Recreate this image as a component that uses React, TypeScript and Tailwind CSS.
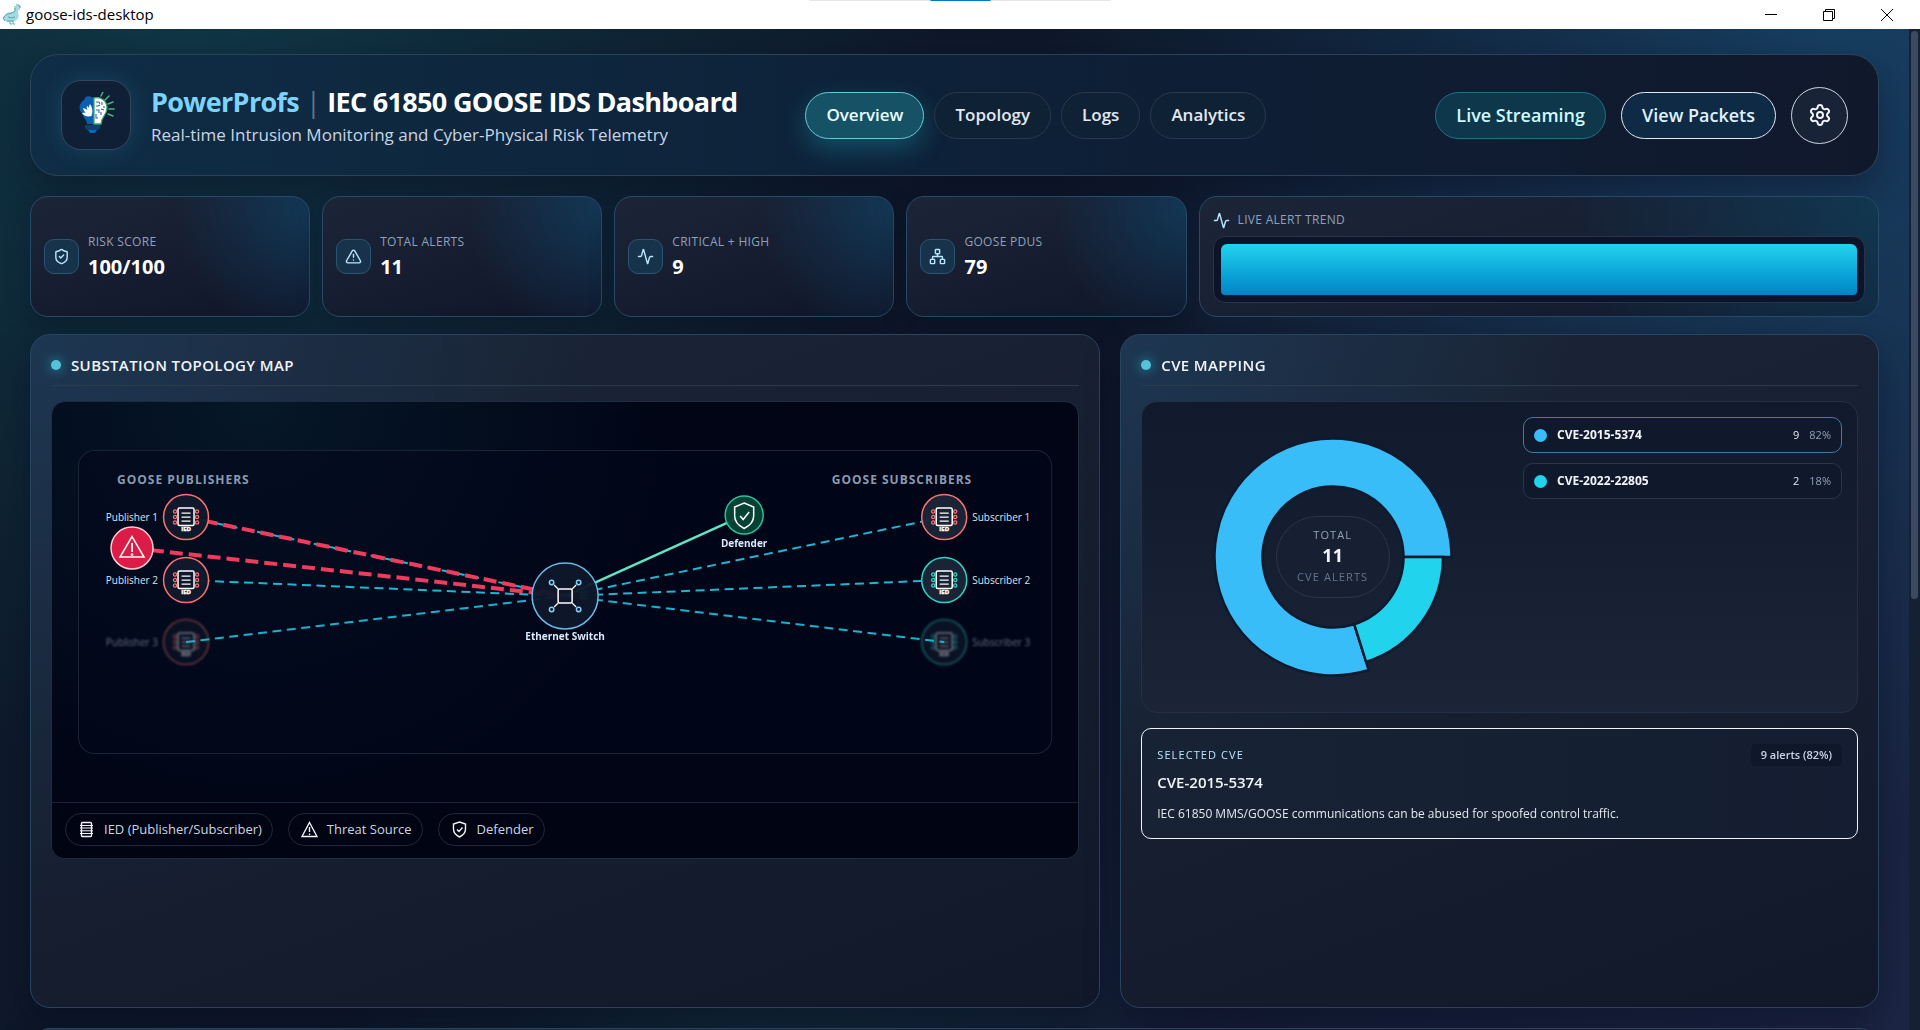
import {Activity, Network, Settings, ShieldCheck, TriangleAlert} from "lucide-react";
import type {LucideIcon} from "lucide-react";
import type {ReactNode} from "react";

const tabs = ["Overview", "Topology", "Logs", "Analytics"];

const stats: {label: string; value: string; icon: LucideIcon}[] = [
    {label: "Risk Score", value: "100/100", icon: ShieldCheck},
    {label: "Total Alerts", value: "11", icon: TriangleAlert},
    {label: "Critical + High", value: "9", icon: Activity},
    {label: "GOOSE PDUs", value: "79", icon: Network},
];

const cves = [
    {id: "CVE-2015-5374", count: 9, pct: "82%", dot: "bg-[#38bdf8]", box: "border-[#3f7d9f]"},
    {id: "CVE-2022-22805", count: 2, pct: "18%", dot: "bg-[#22d3ee]", box: "border-[#28354a]"},
];

const rows = [115, 178, 240];

const TitleBar = () => (
    <div className="relative flex h-[29px] shrink-0 items-center justify-between bg-white text-black">
        <div className="flex items-center gap-[5px] pl-[2px]">
            <svg width="19" height="21" viewBox="0 0 19 21">
                <path d="M12 4h2v-2h4v4h-2v3l1 3-2 4-4 2H5l-3-2-1-3 4-4 5-1 3-1z" fill="#a5dbe0"/>
                <path d="M14 1h3v1h1v2M13 2v5l-3 2-5 1-4 4 2 3M6 13l4 1 3-1M5 17h7M8 18v2h2M11 18v2h2" fill="none" stroke="#4aa9b3"/>
            </svg>
            <span className="text-[15px]">goose-ids-desktop</span>
        </div>
        <div className="absolute left-1/2 top-0 flex h-px w-[301px] -translate-x-1/2 justify-center bg-[#e5e5e5]">
            <span className="h-px w-[60px] bg-[#0078d7]"/>
        </div>
        <div className="flex h-full pr-1">
            <button aria-label="Minimize" className="flex w-[58px] items-center justify-center">
                <svg width="12" height="12"><path d="M0 5.5h12" stroke="#000"/></svg>
            </button>
            <button aria-label="Restore" className="flex w-[58px] items-center justify-center">
                <svg width="12" height="12" fill="none" stroke="#000"><path d="M.5 2.5h9v9h-9zM2.500 2.500v-2h9v9h-2"/></svg>
            </button>
            <button aria-label="Close" className="flex w-[58px] items-center justify-center">
                <svg width="12" height="12" stroke="#000"><path d="M0 0l12 12M12 0L0 12"/></svg>
            </button>
        </div>
    </div>
);

const Logo = () => (
    <div className="flex size-[70px] items-center justify-center rounded-[20px] border border-[#33475c] bg-[#0e1f36] shadow-[0_0_24px_rgba(56,189,248,0.16)]">
        <svg width="40" height="46" viewBox="0 0 40 46">
            <path d="M17 6c-4-3-8-2-9 2-5 3-6 9-2 13 1 5 5 7 5 11h7V6z" fill="#0c5fae"/>
            <path d="M18 6c8-2 13 4 13 10 0 7-6 9-6 16h-7z" fill="#fff" stroke="#3fa66b" strokeWidth="1.300"/>
            <path d="M20 10h3l1 2M20 14h2l2-1M26 10v3M28 14v2M20 18h3v3M25 17l3 1M20 22v4h2M25 20v3" fill="none" stroke="#2b6aa8" strokeWidth="1.100"/>
            <path d="M16 24c-5-1-8-4-9-8 4 1 6 3 9 8zM16 23c-3-4-4-8-2-11 2 3 3 6 2 11zM16 23c-4-3-6-6-5-9 3 2 5 5 5 9zM16 24c-5 1-8 0-10-3 4-1 7 0 10 3z" fill="#fff"/>
            <path d="M9 33h15v3l-2 2H11l-2-2z" fill="#0d3f78"/>
            <path d="M12 38h9l-2 3h-5z" fill="#0f67b5"/>
            <path d="M25 4l2-4M29 8l4-4M32 12l5-2M33 17h5M32 22l5 2" stroke="#4fb37a" strokeWidth="1.500" strokeLinecap="round"/>
        </svg>
    </div>
);

const Header = () => (
    <header className="flex items-center rounded-[28px] border border-[#2c4258] bg-linear-to-r from-[#0f2d45] via-[#0d2138] via-50% to-[#10182c] px-[30px] py-[25px] shadow-[0_16px_40px_rgba(8,12,30,0.45)]">
        <div className="flex items-center gap-5">
            <Logo/>
            <div className="pt-1">
                <h1 className="text-[27px] leading-9 font-bold tracking-tight text-white">
                    <span className="text-[#7dd3fc]">PowerProfs</span>
                    <span className="mx-[7px] font-normal text-slate-500">|</span>
                    IEC 61850 GOOSE IDS Dashboard
                </h1>
                <p className="text-[17px] leading-[30px] text-slate-300">Real-time Intrusion Monitoring and Cyber-Physical Risk Telemetry</p>
            </div>
        </div>
        <nav className="mr-auto ml-[68px] flex gap-[10px]">
            {tabs.map((tab, i) => (
                <button
                    key={tab}
                    className={`h-[47px] rounded-full border px-5 text-[17px] font-semibold ${i === 0
                        ? "border-[#67c9d3] bg-[#155265] text-cyan-50 shadow-[0_10px_26px_rgba(34,211,238,0.25)]"
                        : "border-[#28394d] bg-[#0f2135] text-slate-200"}`}
                >{tab}</button>
            ))}
        </nav>
        <div className="flex items-center gap-[15px]">
            <button className="h-[47px] rounded-full border border-[#24707f] bg-[#0f374b] px-5 text-lg font-semibold text-[#cffafe]">Live Streaming</button>
            <button className="h-[47px] rounded-full border border-slate-200 bg-[#0f2a44] px-5 text-lg font-semibold text-sky-100">View Packets</button>
            <button aria-label="Settings" className="flex size-[57px] items-center justify-center rounded-full border border-slate-300 bg-[#182338] text-slate-100">
                <Settings size={24} strokeWidth={2}/>
            </button>
        </div>
    </header>
);

const StatCard = ({label, value, icon: Icon}: {label: string; value: string; icon: LucideIcon}) => (
    <div className="flex items-center gap-[9px] rounded-[18px] border border-[#274a66] bg-[radial-gradient(circle_at_100%_10%,rgba(14,80,120,0.5),transparent_45%),linear-gradient(160deg,#1c2538,#101528)] px-[13px] shadow-[0_10px_24px_rgba(5,10,25,0.3)]">
        <span className="flex size-[35px] items-center justify-center rounded-[10px] border border-[#2a5470] bg-[#17334b] text-[#bae6fd]">
            <Icon size={17} strokeWidth={2}/>
        </span>
        <div>
            <p className="text-xs leading-5 tracking-wide text-slate-400 uppercase">{label}</p>
            <p className="text-xl leading-[30px] font-bold text-white">{value}</p>
        </div>
    </div>
);

const TrendCard = () => (
    <div className="rounded-[18px] border border-[#274a66] bg-[radial-gradient(circle_at_100%_10%,rgba(14,80,110,0.5),transparent_45%),linear-gradient(160deg,#1c2538,#111a2e)] p-[13px]">
        <div className="flex items-center gap-2 text-[#bae6fd]">
            <Activity size={17} strokeWidth={2}/>
            <span className="text-xs leading-5 tracking-wide text-slate-400">LIVE ALERT TREND</span>
        </div>
        <div className="mt-[6px] h-[67px] rounded-xl border border-[#28344a] bg-[#0d1328] p-[7px]">
            <div className="h-full rounded-t-md rounded-b-sm bg-linear-to-b from-[#22d3ee] to-[#0284c7]"/>
        </div>
    </div>
);

const Panel = ({title, span, children}: {title?: string; span: string; children?: ReactNode}) => (
    <section className={`${span} min-h-[674px] rounded-[20px] border border-[#274560] bg-[radial-gradient(circle_at_0%_0%,rgba(32,80,120,0.4),transparent_45%),linear-gradient(160deg,#1c2638,#111829)] px-5 pt-[18px] shadow-[0_14px_34px_rgba(5,10,30,0.4)]`}>
        {title && (
            <div className="flex items-center gap-[10px] border-b border-[#2b3b4e] pb-2">
                <span className="size-[10px] rounded-full bg-[#57c3d8] shadow-[0_0_12px_rgba(34,211,238,0.7)]"/>
                <h2 className="text-[15px] leading-6 font-semibold tracking-wide text-slate-100 uppercase">{title}</h2>
            </div>
        )}
        <div className="pt-[15px]">{children}</div>
    </section>
);

const IedNode = ({x, y, color, fill}: {x: number; y: number; color: string; fill: string}) => (
    <g transform={`translate(${x} ${y})`}>
        <circle r="22.500" fill={fill} fillOpacity="0.970" stroke={color} strokeWidth="1.500"/>
        <rect x="-8" y="-9" width="16" height="17.500" rx="1.500" fill="none" stroke="#fff" strokeWidth="1.500"/>
        <path d="M-4.500-4h9M-4.500 0h9M-4.500 4h9" stroke="#fff" strokeWidth="1.200"/>
        <g fill="none" stroke={color} strokeWidth="1.300">
            {[-5.5, 0, 5.5].map(dy => (
                <g key={dy}>
                    <circle cx="-11" cy={dy} r="1.600"/>
                    <circle cx="11" cy={dy} r="1.600"/>
                </g>
            ))}
        </g>
        <text y="14" textAnchor="middle" fontSize="6" fontWeight="700" fill="#fff" stroke="#fff" strokeWidth="0.400">IED</text>
    </g>
);

const TopologyMap = () => (
    <svg viewBox="0 0 1026 400" className="block w-full" fontSize="10">
        <rect x="26.500" y="48.500" width="973" height="303" rx="16" fill="#02061a" fillOpacity="0.500" stroke="#1c2434"/>
        <g fill="#8a9ab0" fontSize="12" fontWeight="700" letterSpacing="1">
            <text x="65" y="82">GOOSE PUBLISHERS</text>
            <text x="920" y="82" textAnchor="end">GOOSE SUBSCRIBERS</text>
        </g>
        {rows.slice(0, 2).map(y => (
            <path key={y} d={`M134 ${y}L513 194M513 194L892 ${y}`} stroke="#1fb6d0" strokeWidth="2" strokeDasharray="9 5.500"/>
        ))}
        <path d="M134 115L513 194M80 146L513 194" stroke="#ef3b5d" strokeWidth="4" strokeDasharray="13 6"/>
        <path d="M513 194L692 113" stroke="#5ee6c4" strokeWidth="2.500"/>
        {rows.map((y, i) => (
            <g key={y} className={i === 2 ? "opacity-45 blur-[1px]" : ""}>
                <IedNode x={134} y={y} color="#f87171" fill="#111a2c"/>
                <text x="106" y={y + 4} textAnchor="end" fill="#dbe4f0">Publisher {i + 1}</text>
                <IedNode x={892} y={y} color={i === 0 ? "#f87171" : "#2dd4bf"} fill="#1c2539"/>
                <text x="920" y={y + 4} fill="#dbe4f0">Subscriber {i + 1}</text>
            </g>
        ))}
        <path d="M134 240L513 194M513 194L892 240" stroke="#1fb6d0" strokeWidth="2" strokeDasharray="9 5.500"/>
        <g transform="translate(80 146)" stroke="#fff" fill="none">
            <circle r="21" fill="#dc1c46" stroke="#fecdd3" strokeWidth="1.500"/>
            <path d="M0-11.500L12 9h-24z" strokeWidth="1.500"/>
            <path d="M0-5v9" strokeWidth="1.800"/>
            <circle cy="6.500" r="0.900" strokeWidth="1"/>
        </g>
        <g transform="translate(513 194)" fill="none">
            <circle r="33" fill="#0f182b" fillOpacity="0.960" stroke="#6bb8e6" strokeWidth="1.500"/>
            <rect x="-7" y="-7" width="14" height="14" rx="1.500" stroke="#fff" strokeWidth="1.500"/>
            <path d="M-7-7l-4-4M7-7l4-4M-7 7l-4 4M7 7l4 4" stroke="#fff" strokeWidth="1.200"/>
            <g stroke="#7dd3fc" strokeWidth="1.500">
                <circle cx="-13.500" cy="-13.500" r="2.200"/>
                <circle cx="13.500" cy="-13.500" r="2.200"/>
                <circle cx="-13.500" cy="13.500" r="2.200"/>
                <circle cx="13.500" cy="13.500" r="2.200"/>
            </g>
        </g>
        <g transform="translate(692 113)" fill="none">
            <circle r="19" fill="#064434" fillOpacity="0.960" stroke="#2ac29c" strokeWidth="1.500"/>
            <path d="M0-12l9.500 4V1C9.500 7 5 11 0 13.500-5 11-9.500 7-9.500 1v-9z" stroke="#fff" strokeWidth="1.500"/>
            <path d="M-4 1l3 3.500L5-3" stroke="#fff" strokeWidth="1.500"/>
        </g>
        <g fill="#dbeafe" fontWeight="700" textAnchor="middle">
            <text x="513" y="238">Ethernet Switch</text>
            <text x="692" y="145">Defender</text>
        </g>
    </svg>
);

const LegendPill = ({label, children}: {label: string; children: ReactNode}) => (
    <li className="flex h-[33px] items-center gap-[9px] rounded-full border border-[#202a3c] pr-[10px] pl-3 text-[13px] text-slate-300">
        <svg width="17" height="17" viewBox="0 0 17 17" fill="none" stroke="#f1f5f9" strokeWidth="1.400">{children}</svg>
        {label}
    </li>
);

const Donut = () => (
    <div className="relative flex h-[280px] items-center justify-center">
        <svg width="240" height="240" viewBox="-120 -120 240 240" stroke="#0f1a2e" strokeWidth="2.500">
            <path d="M118.500 0A118.500 118.500 0 1 0 35.600 113L21.200 67.200A70.500 70.500 0 1 1 70.500 0z" fill="#38bdf8"/>
            <path d="M110 0A110 110 0 0 1 33.100 104.900L21.200 67.200A70.500 70.500 0 0 0 70.500 0z" fill="#22d3ee"/>
        </svg>
        <div className="absolute flex h-[82px] w-[114px] flex-col items-center justify-center rounded-full border border-[#28364a] bg-[#172033]">
            <span className="text-[11px] leading-4 tracking-widest text-slate-400">TOTAL</span>
            <span className="text-lg leading-6 font-bold text-slate-100">11</span>
            <span className="text-[11px] leading-5 tracking-widest text-slate-500">CVE ALERTS</span>
        </div>
    </div>
);

const CveMapping = () => (
    <>
        <div className="grid grid-cols-[11fr_10fr] gap-[15px] rounded-2xl border border-[#223046] bg-linear-to-b from-[#11192c] to-[#1b2537] p-[15px]">
            <Donut/>
            <div className="flex flex-col gap-[10px]">
                {cves.map(cve => (
                    <button key={cve.id} className={`flex h-9 items-center rounded-[10px] border bg-[#10182b] px-[10px] text-[11px] ${cve.box}`}>
                        <span className={`mr-[10px] size-[13px] rounded-full ${cve.dot}`}/>
                        <span className="text-xs font-bold text-slate-100">{cve.id}</span>
                        <span className="ml-auto text-slate-200">{cve.count}</span>
                        <span className="ml-[10px] text-slate-400">{cve.pct}</span>
                    </button>
                ))}
            </div>
        </div>
        <button className="mt-[15px] block w-full rounded-[10px] border border-slate-100 bg-linear-to-r from-[#172335] to-[#141d31] p-[15px] pb-3 text-left">
            <span className="flex items-center justify-between">
                <span className="text-[11px] tracking-widest text-[#bae6fd]">SELECTED CVE</span>
                <span className="rounded-[5px] bg-[#0f172b] px-[10px] text-[11px] leading-[22px] font-semibold text-slate-300">9 alerts (82%)</span>
            </span>
            <span className="mt-1 block text-[15px] leading-6 font-semibold text-slate-100">CVE-2015-5374</span>
            <span className="mt-2 block text-xs leading-6 text-slate-200">IEC 61850 MMS/GOOSE communications can be abused for spoofed control traffic.</span>
        </button>
    </>
);

const App = () => {
    return (
        <div className="flex h-screen flex-col overflow-hidden font-['Open_Sans','Noto_Sans',sans-serif]">
            <TitleBar/>
            <div className="flex min-h-0 flex-1">
                <main className="min-w-0 flex-1 overflow-hidden bg-[radial-gradient(circle_at_10%_0%,rgba(20,100,115,0.38),transparent_38%),radial-gradient(circle_at_96%_2%,rgba(28,110,160,0.42),transparent_38%),radial-gradient(circle_at_40%_105%,rgba(20,90,90,0.25),transparent_28%),linear-gradient(130deg,#0d1b2a,#0f172a_50%,#1c2644)] px-[30px] pt-[25px]">
                    <Header/>
                    <div className="mt-5 grid h-[121px] grid-cols-[repeat(4,minmax(0,7fr))_minmax(0,17fr)] gap-3">
                        {stats.map(stat => <StatCard key={stat.label} {...stat}/>)}
                        <TrendCard/>
                    </div>
                    <div className="mt-[17px] grid grid-cols-12 gap-5">
                        <Panel title="Substation Topology Map" span="col-span-7">
                            <div className="overflow-hidden rounded-[14px] border border-[#1f2c3f] bg-[radial-gradient(circle_at_20%_0%,#061728,#010516_45%)]">
                                <TopologyMap/>
                                <ul className="flex gap-[15px] border-t border-[#1c2434] bg-[#010412] px-[13px] pt-[10px] pb-3">
                                    <LegendPill label="IED (Publisher/Subscriber)">
                                        <rect x="3.500" y="1.500" width="10" height="14" rx="1"/>
                                        <path d="M2 4.500h13M2 7h13M2 9.800h13M2 12.500h13" strokeWidth="1"/>
                                    </LegendPill>
                                    <LegendPill label="Threat Source">
                                        <path d="M8.500 1.500l7.500 14H1zM8.500 6v5M8.500 12.500v1.500"/>
                                    </LegendPill>
                                    <LegendPill label="Defender">
                                        <path d="M8.500 1l6 2v5c0 4-3 6.500-6 8-3-1.500-6-4-6-8V3zM6 8.500l2 2 3.500-4"/>
                                    </LegendPill>
                                </ul>
                            </div>
                        </Panel>
                        <Panel title="CVE Mapping" span="col-span-5">
                            <CveMapping/>
                        </Panel>
                        <Panel span="col-span-12"/>
                    </div>
                </main>
                <div className="w-[11px] bg-[#152033] p-[2px]">
                    <div className="h-[568px] rounded-full bg-[#3b4963]"/>
                </div>
            </div>
        </div>
    );
}
export default App;
